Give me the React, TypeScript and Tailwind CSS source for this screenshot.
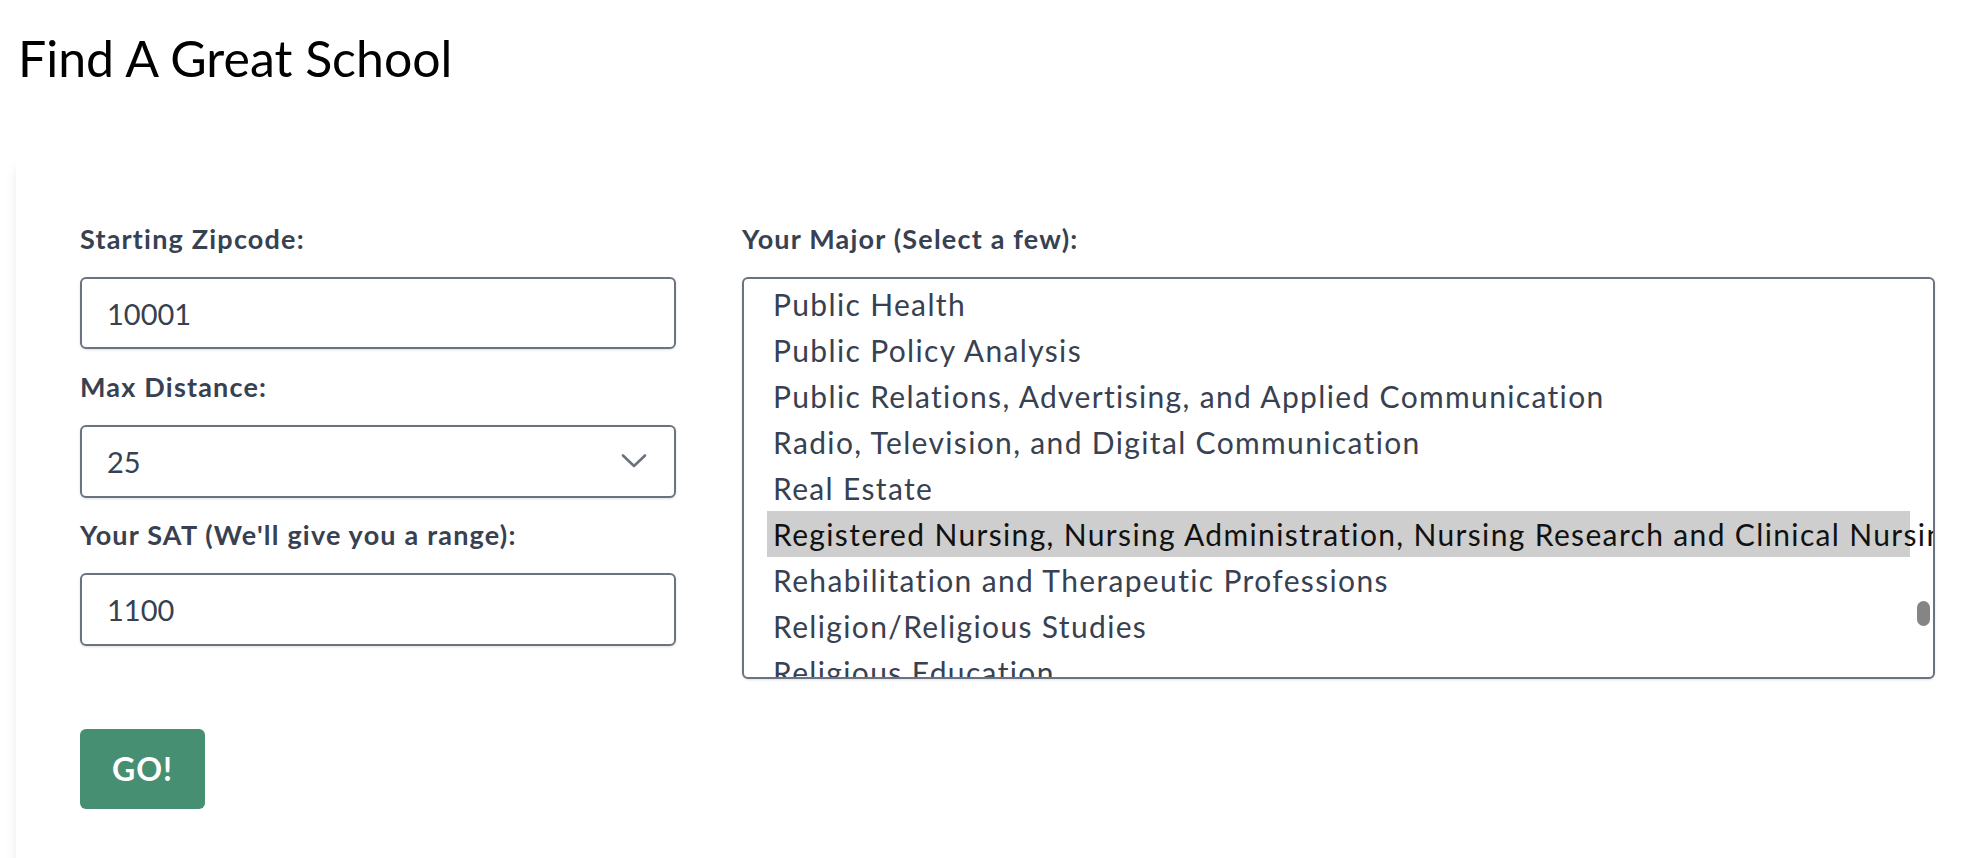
import React from "react";

const majors = [
  "Public Health",
  "Public Policy Analysis",
  "Public Relations, Advertising, and Applied Communication",
  "Radio, Television, and Digital Communication",
  "Real Estate",
  "Registered Nursing, Nursing Administration, Nursing Research and Clinical Nursing",
  "Rehabilitation and Therapeutic Professions",
  "Religion/Religious Studies",
  "Religious Education",
  "Research and Experimental Psychology",
];

const selectedMajor = "Registered Nursing, Nursing Administration, Nursing Research and Clinical Nursing";

function Label({ children }: { children: React.ReactNode }) {
  return (
    <label className="block h-[32px] leading-[32px] text-[27px] tracking-[1.2px] font-bold text-[#374151] mb-[22px]">
      {children}
    </label>
  );
}

export default function App() {
  return (
    <div className="h-[858px] overflow-hidden bg-white font-['Lato','Open_Sans',sans-serif]">
      <h1 className="pl-[18px] pt-[28px] text-[50px] leading-[60px] font-normal text-black">
        Find A Great School
      </h1>

      <div className="ml-[16px] mt-[67px] h-[760px] bg-white shadow-lg pl-[64px] pr-[36px] pt-[68px]">
        <div className="flex gap-[66px]">
          {/* left column */}
          <div className="w-[596px] shrink-0">
            <Label>Starting Zipcode:</Label>
            <input
              type="text"
              defaultValue="10001"
              readOnly
              className="block w-full h-[72px] rounded-md border-2 border-[#6b7280] shadow-sm px-[25px] text-[29px] text-[#374151] outline-none"
            />

            <div className="mt-[22px]">
              <Label>Max Distance:</Label>
              <div className="relative">
                <select
                  defaultValue="25"
                  className="block w-full h-[73px] appearance-none rounded-md border-2 border-[#6b7280] shadow-sm bg-white px-[25px] text-[29px] text-[#374151] outline-none"
                >
                  <option value="5">5</option>
                  <option value="10">10</option>
                  <option value="25">25</option>
                  <option value="50">50</option>
                  <option value="100">100</option>
                </select>
                <svg
                  className="pointer-events-none absolute right-[29px] top-[28px]"
                  width="26"
                  height="16"
                  viewBox="0 0 26 16"
                  fill="none"
                  stroke="#6b7280"
                  strokeWidth="2.6"
                  strokeLinecap="round"
                  strokeLinejoin="round"
                >
                  <path d="M2 2.5 L13 13 L24 2.5" />
                </svg>
              </div>
            </div>

            <div className="mt-[21px]">
              <Label>Your SAT (We'll give you a range):</Label>
              <input
                type="text"
                defaultValue="1100"
                readOnly
                className="block w-full h-[73px] rounded-md border-2 border-[#6b7280] shadow-sm px-[25px] text-[29px] text-[#374151] outline-none"
              />
            </div>

            <button className="mt-[83px] w-[125px] h-[80px] rounded-md bg-[#468f72] text-white text-[32px] tracking-[1px] font-bold">
              GO!
            </button>
          </div>

          {/* right column */}
          <div className="flex-1 min-w-0">
            <Label>Your Major (Select a few):</Label>
            <div className="relative h-[402px] overflow-hidden rounded-md border-2 border-[#6b7280] shadow-sm bg-white pt-[2px] px-[23px]">
              {majors.map((m) => (
                <div
                  key={m}
                  className={
                    m === selectedMajor
                      ? "h-[46px] leading-[46px] px-[6px] whitespace-nowrap text-[30px] tracking-[1.35px] bg-[#cecece] text-[#111111]"
                      : "h-[46px] leading-[46px] px-[6px] whitespace-nowrap text-[30px] tracking-[1.35px] text-[#374151]"
                  }
                >
                  {m}
                </div>
              ))}
              <div className="absolute right-[3px] top-[322px] w-[13px] h-[25px] rounded-full bg-[#858585]" />
            </div>
          </div>
        </div>
      </div>
    </div>
  );
}
